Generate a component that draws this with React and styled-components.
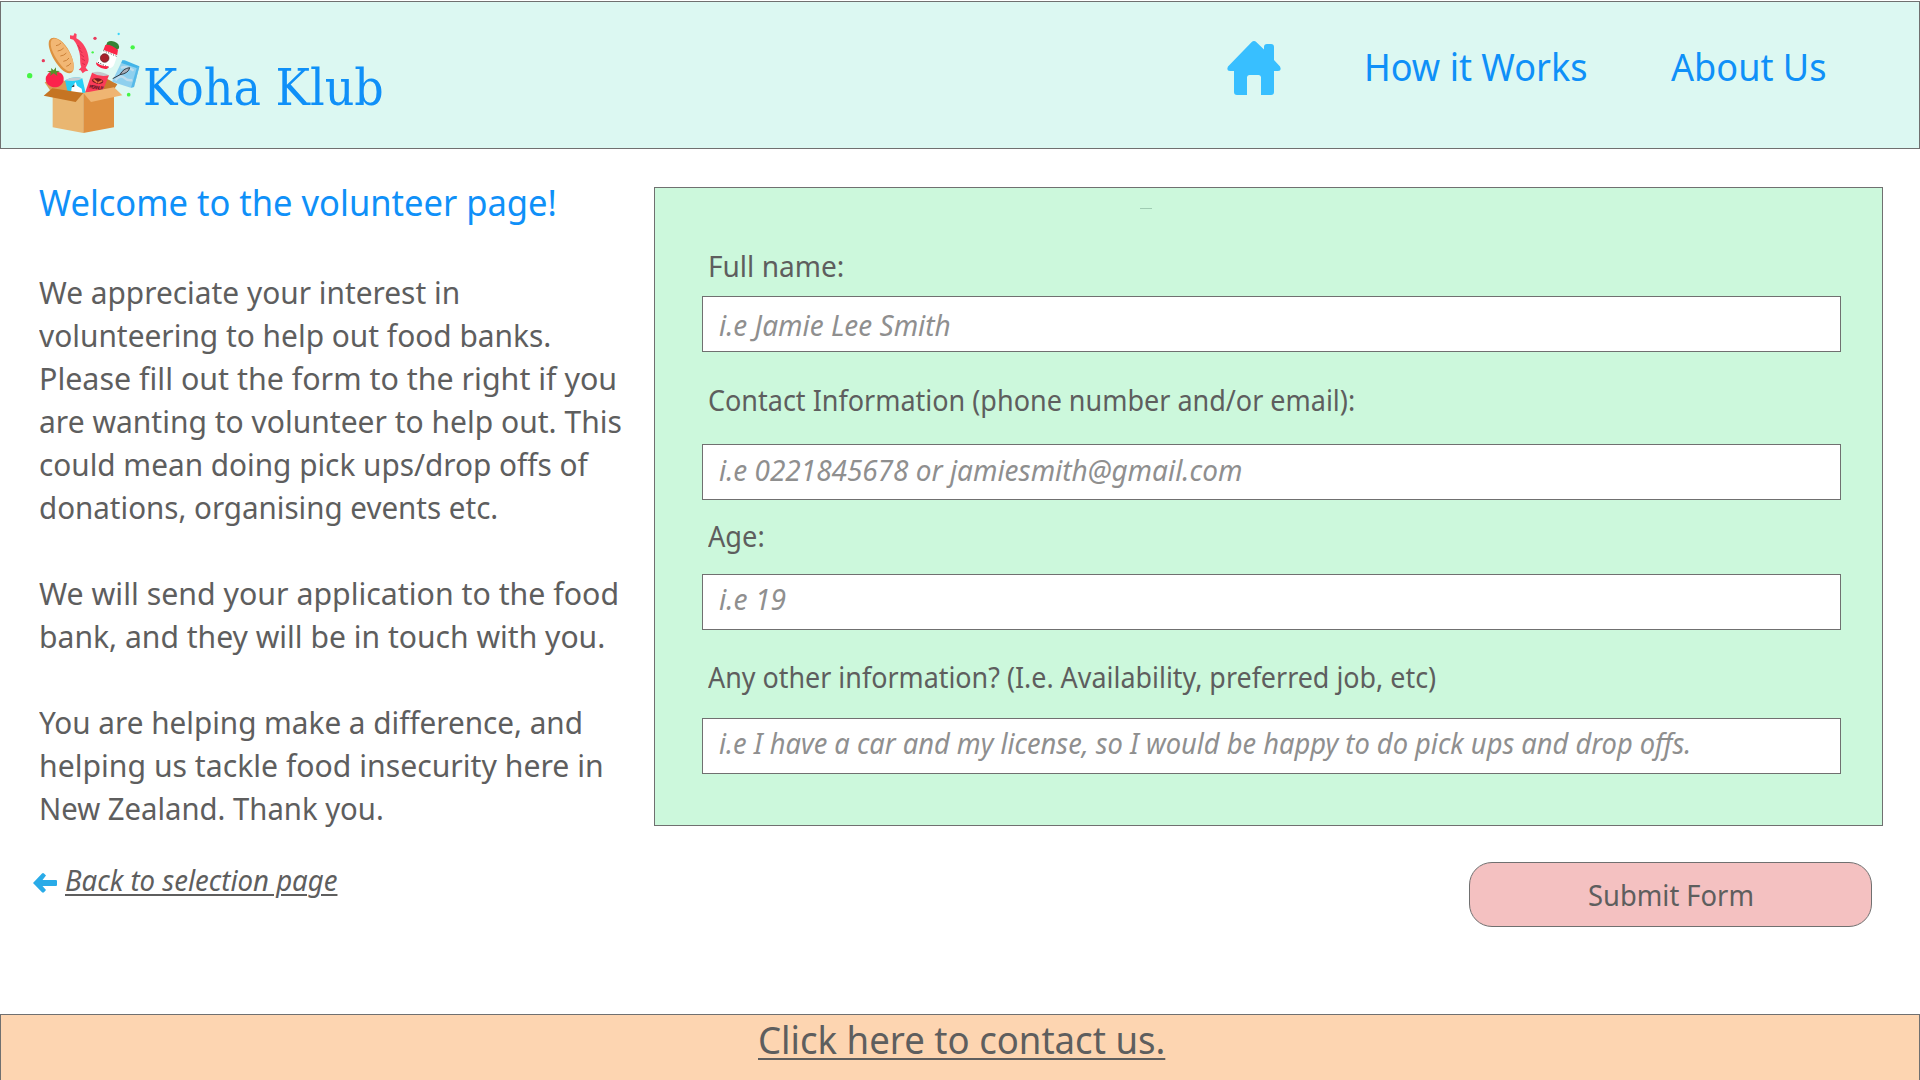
import React, { useRef, useLayoutEffect, useState } from "react";
import styled, { createGlobalStyle } from "styled-components";

const sans = '"Noto Sans", "Open Sans", sans-serif';
const serif = '"DejaVu Serif Condensed", "DejaVu Serif", serif';
const line = "#707070";
const blue = "#0f90f8";
const ink = "#5e5e5e";

const GlobalStyle = createGlobalStyle`
  * { box-sizing: border-box; }
  body { margin: 0; background: #fff; overflow: hidden; }
`;

const Page = styled.div`
  display: flex;
  flex-direction: column;
  width: 1920px;
  height: 1080px;
  padding-top: 1px;
  overflow: hidden;
  font-family: ${sans};
  color: ${ink};
`;

const TextBox = styled.span`
  display: block;
  flex: none;
  width: ${(p) => p.$width}px;
  height: ${(p) => p.$lead}px;
  font-family: ${(p) => (p.$serif ? serif : sans)};
  font-size: ${(p) => p.$size}px;
  line-height: ${(p) => p.$lead}px;
  font-style: ${(p) => (p.$italic ? "italic" : "normal")};
  color: ${(p) => p.$color || "inherit"};
  white-space: nowrap;
`;

const Glyphs = styled.span`
  display: inline-block;
  transform-origin: 0 50%;
  text-decoration: ${(p) => (p.$under ? "underline" : "none")};
  text-decoration-thickness: 2px;
  text-underline-offset: ${(p) => p.$under || 0}px;
`;

/* A single line of text whose drawn width is set in pixels. */
function Line({ children, width, size, lead, under, ...rest }) {
  const ref = useRef(null);
  const [t, setT] = useState("none");
  useLayoutEffect(() => {
    const cs = getComputedStyle(ref.current);
    const ctx = document.createElement("canvas").getContext("2d");
    ctx.font = `${cs.fontStyle} ${cs.fontWeight} ${cs.fontSize} ${cs.fontFamily}`;
    const m = ctx.measureText(children);
    setT(`scaleX(${width / m.actualBoundingBoxRight})`);
  }, [children, width]);
  return (
    <TextBox $width={width} $size={size} $lead={lead} {...rest}>
      <Glyphs ref={ref} $under={under} style={{ transform: t }}>{children}</Glyphs>
    </TextBox>
  );
}

const Header = styled.header`
  display: flex;
  flex: none;
  height: 148px;
  justify-content: space-between;
  background: #dcf8f2;
  border: 1px solid ${line};
`;

const Brand = styled.div`
  display: flex;
  align-items: flex-start;
  padding: 23px 0 0 19px;
`;

const BrandName = styled.div`
  padding-top: 33px;
  margin-left: -7px;
`;

const Nav = styled.nav`
  display: flex;
  align-items: flex-start;
  padding: 38px 94px 0 0;
`;

const NavLink = styled.a`
  margin-left: ${(p) => p.$gap}px;
  color: ${blue};
`;

const HomeIcon = styled.svg`
  width: 54px;
  height: 54px;
  margin-top: 1px;
`;

const Main = styled.main`
  display: flex;
  flex: none;
  height: 865px;
`;

const Intro = styled.section`
  width: 654px;
  padding: 29px 0 0 39px;
`;

const Paragraphs = styled.div`
  display: flex;
  flex-direction: column;
  gap: 43px;
  margin-top: 45px;
`;

const BackLink = styled.a`
  display: flex;
  align-items: center;
  gap: 8px;
  margin: 30px 0 0 -6px;
`;

const BackArrow = styled.svg`
  width: 24px;
  height: 20px;
  margin-top: 6px;
`;

const Work = styled.section`
  display: flex;
  flex-direction: column;
  width: 1229px;
  padding-top: 38px;
`;

const FormPanel = styled.form`
  display: flex;
  flex-direction: column;
  height: 639px;
  padding: 20px 41px 0 47px;
  background: #ccf8dc;
  border: 1px solid ${line};
`;

const Dash = styled.i`
  width: 12px;
  height: 1px;
  margin: 0 0 37px 438px;
  background: #9fcbb2;
`;

const Field = styled.label`
  display: flex;
  flex-direction: column;
  gap: ${(p) => p.$gap}px;
  margin-bottom: ${(p) => p.$after}px;
`;

const Caption = styled.span`
  padding-left: 6px;
`;

const Entry = styled.span`
  display: block;
  height: 56px;
  padding: ${(p) => p.$top}px 0 0 16px;
  background: #fff;
  border: 1px solid ${line};
  color: #8f8f8f;
`;

const Submit = styled.button`
  display: flex;
  justify-content: center;
  align-self: flex-end;
  width: 403px;
  height: 65px;
  margin: 36px 11px 0 0;
  padding: 12px 2px 0 0;
  background: #f4c1c1;
  border: 1px solid ${line};
  border-radius: 23px;
  color: ${ink};
`;

const Footer = styled.footer`
  display: flex;
  justify-content: center;
  flex: none;
  height: 67px;
  background: #fdd5b1;
  border: 1px solid ${line};
  border-bottom: 0;
`;

const intro = [
  [
    ["We appreciate your interest in", 419],
    ["volunteering to help out food banks.", 511],
    ["Please fill out the form to the right if you", 576],
    ["are wanting to volunteer to help out. This", 582],
    ["could mean doing pick ups/drop offs of", 550],
    ["donations, organising events etc.", 458],
  ],
  [
    ["We will send your application to the food", 578],
    ["bank, and they will be in touch with you.", 565],
  ],
  [
    ["You are helping make a difference, and", 542],
    ["helping us tackle food insecurity here in", 562.5],
    ["New Zealand. Thank you.", 343.5],
  ],
];

const fields = [
  { label: "Full name:", lw: 134.5, hint: "i.e Jamie Lee Smith", hw: 231, gap: 10, after: 28, top: 8 },
  { label: "Contact Information (phone number and/or email):", lw: 645.5, hint: "i.e 0221845678 or jamiesmith@gmail.com", hw: 522, gap: 24, after: 16, top: 5 },
  { label: "Age:", lw: 55, hint: "i.e 19", hw: 67, gap: 18, after: 27, top: 4 },
  { label: "Any other information? (I.e. Availability, preferred job, etc)", lw: 727.5, hint: "i.e I have a car and my license, so I would be happy to do pick ups and drop offs.", hw: 970, gap: 21, after: 0, top: 4 },
];

function BoxLogo() {
  return (
    <svg width="130" height="115" viewBox="0 0 390 345">
      <circle cx="29" cy="152" r="8" fill="#45f545" />
      <circle cx="70" cy="107" r="5" fill="#e83a5c" />
      <circle cx="225" cy="40" r="5" fill="#e83a5c" />
      <circle cx="296" cy="27" r="3.500" fill="#39d5fb" />
      <circle cx="338" cy="67" r="6.500" fill="#45f545" />
      <circle cx="218" cy="82" r="3.500" fill="#45f545" />
      <circle cx="326" cy="209" r="5.500" fill="#45f545" />
      <path d="M74 172L96 162L138 168L190 204L98 208Z" fill="#dc9b55" />
      <path d="M190 204L262 162L292 178L280 196Z" fill="#c87b2c" />
      <path d="M88 46C95 34 112 37 128 52C150 74 166 112 160 136C155 149 139 146 126 134C103 113 79 66 88 46Z" fill="#dc9240" />
      <path d="M95 44C104 36 116 42 130 56C150 78 166 112 160 134C153 143 142 139 130 128C107 104 84 62 95 44Z" fill="#f2b774" />
      <path d="M108 62Q117 61 123 54M113 78Q124 77 131 69M121 93Q132 92 139 84M130 109Q141 108 147 99M139 124Q148 122 153 114" fill="none" stroke="#cb8138" strokeWidth="3" />
      <path d="M150 31L160 32L164 24L170 28L169 40C190 51 204 75 206 103C206 113 201 121 197 128L205 137L196 139L188 145L182 136L176 135L184 126C178 112 183 98 177 79C173 64 169 54 160 44L150 41Z" fill="#fb4260" />
      <path d="M173 60L181 72M178 74L187 84M181 87L192 96M185 101L195 107M187 115L195 119" stroke="#d72b4a" strokeWidth="3" />
      <path d="M262 52Q270 45 284 50Q300 57 297 70L288 77L257 64Z" fill="#358236" />
      <path d="M256 60Q272 57 294 75L291 92L250 76Z" fill="#fb2547" />
      <path d="M249 74L292 91L283 117Q278 130 266 130L232 112Z" fill="#fff" />
      <path d="M250 77L290 94M234 112L270 129" stroke="#333" strokeWidth="3" strokeDasharray="3 5" />
      <path d="M229 112Q243 125 266 124L262 131Q249 135 232 122Q226 118 229 112Z" fill="#fb2547" />
      <circle cx="254" cy="99" r="13" fill="#a71f2b" stroke="#541d20" strokeWidth="2" />
      <path d="M307 106L358 125L342 186L332 188L276 170Z" fill="#8fd0ee" />
      <path d="M307 106L314 106L358 124L356 131L304 114Z" fill="#43b4e8" />
      <path d="M351 126L358 125L342 186L333 188Z" fill="#56b9e8" />
      <path d="M303 129Q318 120 341 137M286 166Q302 148 312 158T337 165" fill="none" stroke="#bfdcec" strokeWidth="7" />
      <path d="M278 161L304 147" stroke="#333a43" strokeWidth="3" />
      <path d="M300 149Q310 130 329 128Q326 145 300 149Z" fill="#a9adb8" stroke="#333a43" strokeWidth="3" />
      <path d="M84 146C93 135 115 137 126 147C138 162 128 184 108 187C88 188 73 173 78 155Z" fill="#fc234c" />
      <path d="M81 139L94 137L93 129L101 136L108 127L108 137L120 138L110 143L112 153L101 145L90 153L93 143Z" fill="#56902a" />
      <path d="M135 166Q162 151 187 160L197 204L143 202Z" fill="#28cff6" />
      <path d="M135 166Q162 151 187 160Q170 172 135 166Z" fill="#c5ced4" />
      <path d="M162 178L167 171L171 182L185 191L187 203H153L155 188Z" fill="#fff" />
      <path d="M163 178L154 187L163 185" fill="#26333a" />
      <path d="M216 143L267 151L247 201L196 201Z" fill="#fa3b58" />
      <path d="M216 143Q240 135 267 151Q240 158 216 143Z" fill="#c3c8cd" />
      <ellipse cx="233" cy="168" rx="17" ry="8" transform="rotate(8 233 168)" fill="#72191f" />
      <path d="M222 165L230 171M235 173L245 168" stroke="#f36f45" strokeWidth="5" strokeLinecap="round" />
      <text x="207" y="189" transform="rotate(9 207 189)" fontFamily="Liberation Sans" fontWeight="bold" fontSize="15" textLength="43" fill="#641824">PEANUT</text>
      <path d="M98 204H190V324L98 307Z" fill="#e9b671" />
      <path d="M190 204L282 197V307L190 324Z" fill="#df9040" />
      <path d="M97 190L190 204L167 231L71 212Z" fill="#c57423" />
      <path d="M190 204L282 187L307 211L213 231Z" fill="#efb572" />
    </svg>
  );
}

export default function App() {
  return (
    <>
      <GlobalStyle />
      <Page>
        <Header>
          <Brand>
            <BoxLogo />
            <BrandName>
              <Line width={239} size={50} lead={60} $serif $color={blue}>Koha Klub</Line>
            </BrandName>
          </Brand>
          <Nav>
            <HomeIcon viewBox="0 0 54 54">
              <path d="M24.500 1.200Q27 -1.200 29.500 1.200L37 8.500V6Q37 3 40 3H44Q47 3 47 6V19L53 25.500Q55 30 51 30H47V51Q47 54 44 54H34V36Q33.500 34 31.500 34H22.500Q20.500 34 20 36V54H10Q7 54 7 51V30H3Q-1 30 1 25.500Z" fill="#38bfff" />
            </HomeIcon>
            <NavLink $gap={83}><Line width={222} size={39} lead={52}>How it Works</Line></NavLink>
            <NavLink $gap={85}><Line width={154} size={39} lead={52}>About Us</Line></NavLink>
          </Nav>
        </Header>
        <Main>
          <Intro>
            <Line width={516} size={37} lead={48} $color={blue}>Welcome to the volunteer page!</Line>
            <Paragraphs>
              {intro.map((lines) => (
                <div key={lines[0][0]}>
                  {lines.map(([text, w]) => (
                    <Line key={text} width={w} size={31} lead={43}>{text}</Line>
                  ))}
                </div>
              ))}
            </Paragraphs>
            <BackLink>
              <BackArrow viewBox="0 0 24 20">
                <path d="M9 0.500Q10 -0.300 11 0.500L13 2.500L9.500 7H23Q24 7 24 8V12Q24 13 23 13H9.500L13 17L11 19.300Q10 20 9 19.300L0 10Z" fill="#29abe8" />
              </BackArrow>
              <Line width={272} size={29} lead={40} under={3} $italic>Back to selection page</Line>
            </BackLink>
          </Intro>
          <Work>
            <FormPanel>
              <Dash />
              {fields.map((f) => (
                <Field key={f.label} $gap={f.gap} $after={f.after}>
                  <Caption><Line width={f.lw} size={29} lead={40}>{f.label}</Line></Caption>
                  <Entry $top={f.top}><Line width={f.hw} size={29} lead={40} $italic>{f.hint}</Line></Entry>
                </Field>
              ))}
            </FormPanel>
            <Submit type="button"><Line width={164} size={29} lead={40}>Submit Form</Line></Submit>
          </Work>
        </Main>
        <Footer>
          <Line width={405} size={39} lead={48} under={4}>Click here to contact us.</Line>
        </Footer>
      </Page>
    </>
  );
}
